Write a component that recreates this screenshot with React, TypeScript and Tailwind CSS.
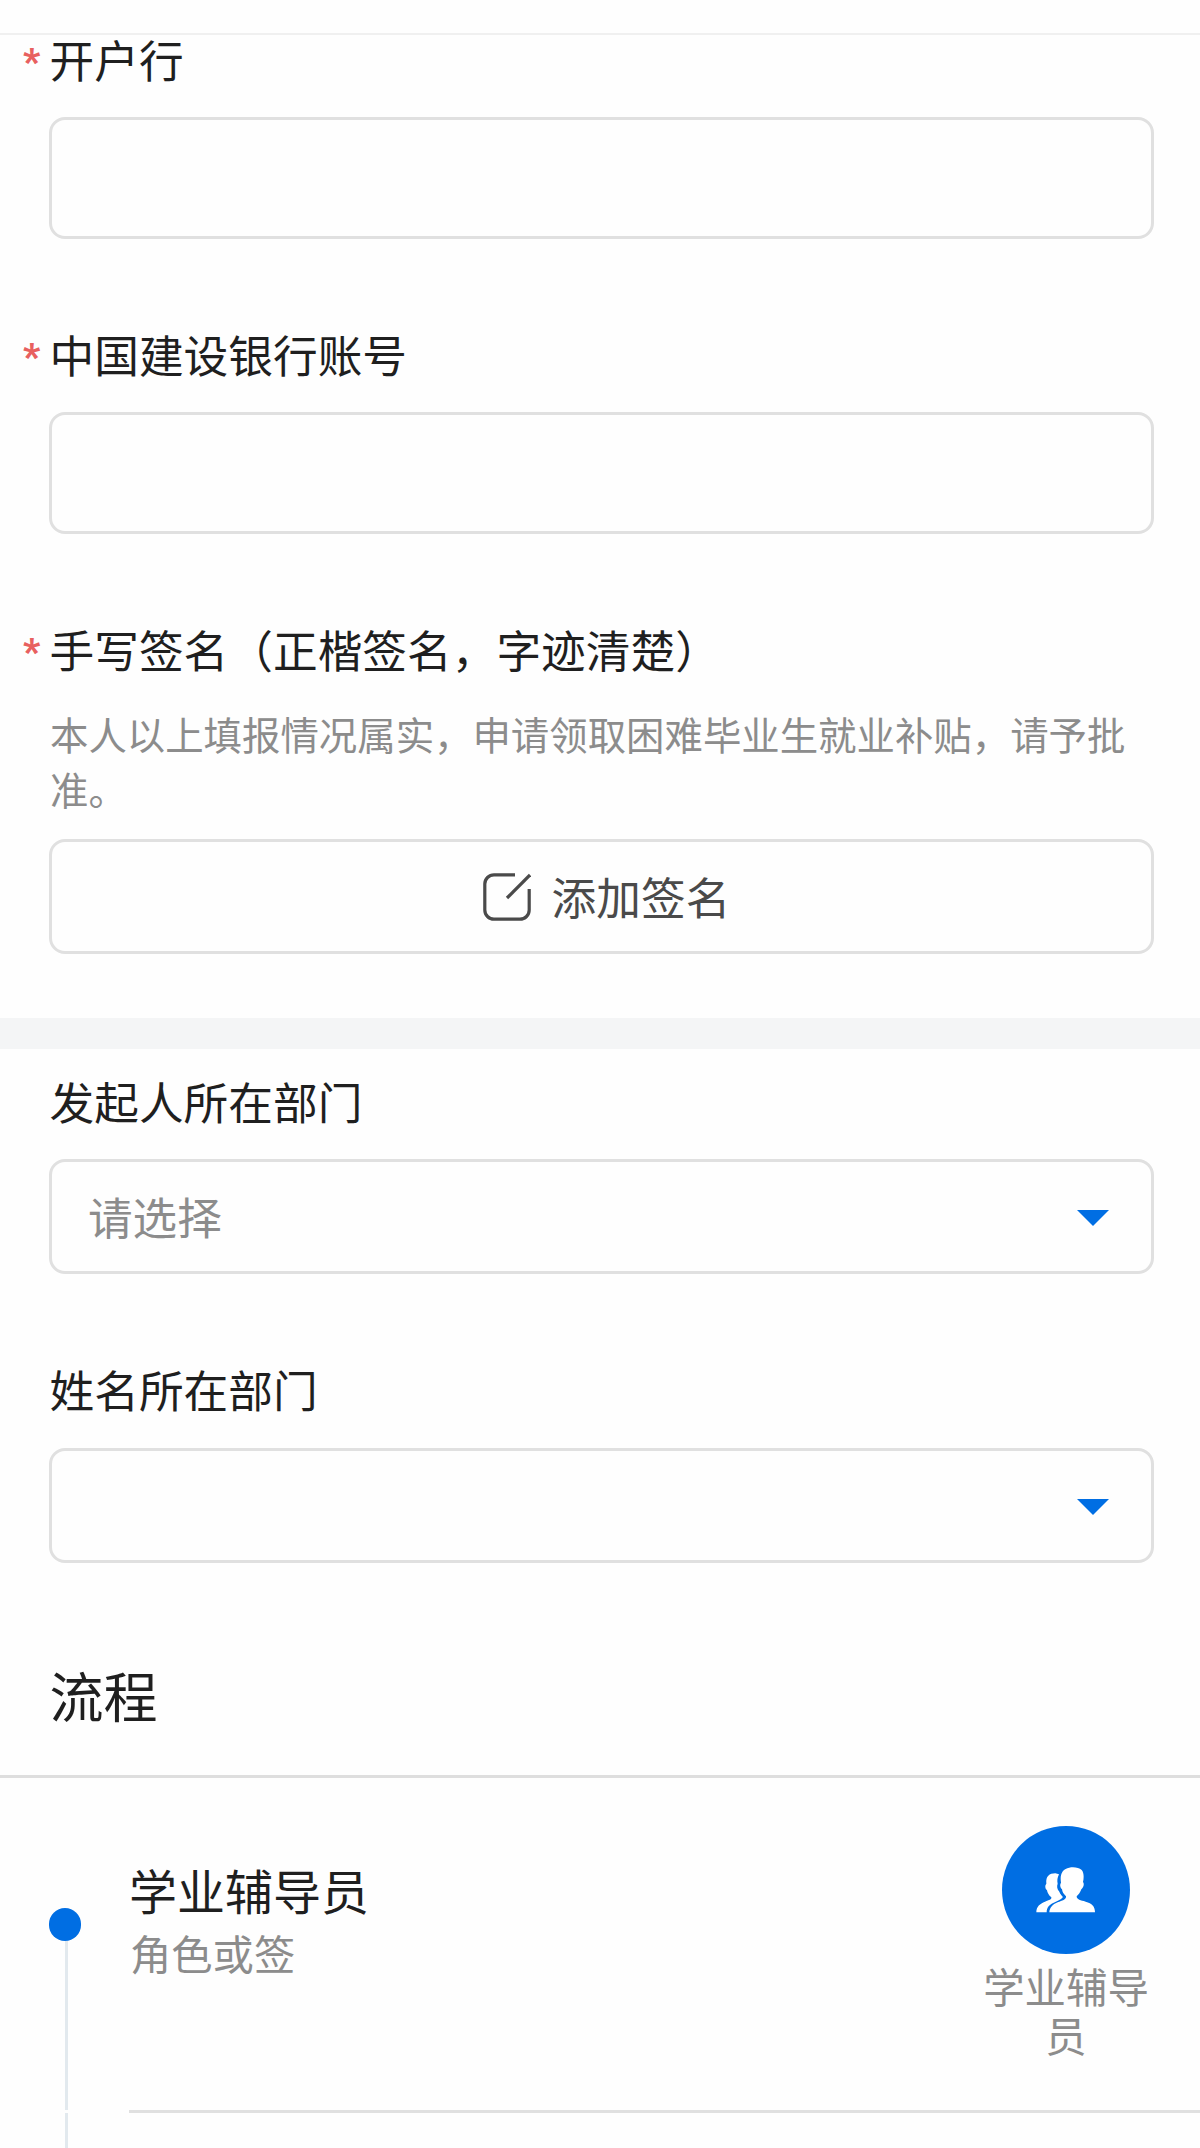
import type { ReactNode } from "react";

const SignIcon = () => (
  <svg className="mt-px h-12 w-12 shrink-0" viewBox="0 0 48 48" fill="none" stroke="#4a4a4a" strokeWidth="3.2">
    <path d="M32 1.8H11A9.2 9.2 0 0 0 1.8 11V37A9.2 9.2 0 0 0 11 46.2H37A9.2 9.2 0 0 0 46.2 37V16" />
    <path d="M24 25L47 2" />
  </svg>
);

const GroupIcon = () => (
  <svg className="h-[46px] w-[60px]" viewBox="230 200 180 138" fill="#fff">
    <path d="M231 336C231 318 242 310 257 304C270 299 277 298 276 291C268 285 264 277 263 270C257 265 256 255 261 250C259 228 270 219 288 219L299 222C294 232 293 240 295 250C292 257 293 267 300 274C303 281 307 286 311 290C304 299 294 302 283 307C269 313 262 322 262 336Z" />
    <path d="M270 336C271 320 282 311 295 306C310 300 321 298 320 288C313 281 309 275 308 267C302 262 301 252 305 247C301 222 310 210 319 206C334 198 357 200 367 209C374 217 374 232 371 245C376 251 372 263 366 267C363 276 358 283 352 288C352 298 364 300 379 304C398 309 407 318 407 336Z" />
  </svg>
);

const Label = ({ required, children }: { required?: boolean; children: ReactNode }) => (
  <div className="flex h-12 items-center text-[44.7px] leading-[48px] text-[#1f1f1f]">
    <span className="w-[49.5px] shrink-0 pt-[6px] pl-[23px] font-[Roboto,sans-serif] text-[37px] font-black text-[#e8605f]">
      {required ? "*" : ""}
    </span>
    <span className="whitespace-nowrap">{children}</span>
  </div>
);

const TextBox = () => (
  <div className="mr-[46px] ml-[49px] h-[122px] rounded-2xl border-3 border-[#e0e0e0]" />
);

const SelectBox = ({ placeholder }: { placeholder?: string }) => (
  <div className="mr-[46px] ml-[49px] flex h-[115px] items-center justify-between rounded-2xl border-3 border-[#e0e0e0] pr-[42px] pl-9 text-[44.6px] leading-[48px] text-[#8c8c8c]">
    <span className="pb-[2px]">{placeholder}</span>
    <svg className="mt-[3px] h-4 w-8" viewBox="0 0 32 16">
      <path d="M0 0H32L16 16Z" fill="#006ee3" />
    </svg>
  </div>
);

export default function App() {
  return (
    <div className="h-[2148px] w-[1200px] overflow-hidden bg-[#fefefe] font-['Noto_Sans_CJK_SC',sans-serif]">
      <div className="h-[35px] border-b-2 border-[#f0f0f0]" />

      <div>
        <Label required>开户行</Label>
        <div className="mt-[34px]">
          <TextBox />
        </div>
      </div>

      <div className="mt-[91px]">
        <Label required>中国建设银行账号</Label>
        <div className="mt-[34px]">
          <TextBox />
        </div>
      </div>

      <div className="mt-[91px]">
        <Label required>手写签名（正楷签名，字迹清楚）</Label>
        <p className="mt-[33px] ml-[50px] w-[1085px] text-[38.42px] leading-[55px] text-[#8c8c8c]">
          本人以上填报情况属实，申请领取困难毕业生就业补贴，请予批准。
        </p>
        <div className="mt-[23px] mr-[46px] ml-[49px] flex h-[115px] items-center justify-center gap-[21px] rounded-2xl border-3 border-[#e0e0e0] pl-[10px] text-[44.7px] leading-[48px] text-[#4a4a4a]">
          <SignIcon />
          <span className="pb-[2px]">添加签名</span>
        </div>
      </div>

      <div className="mt-16 h-[31px] bg-[#f4f5f6]" />

      <div className="mt-7">
        <Label>发起人所在部门</Label>
        <div className="mt-[34px]">
          <SelectBox placeholder="请选择" />
        </div>
      </div>

      <div className="mt-[91px]">
        <Label>姓名所在部门</Label>
        <div className="mt-[35px]">
          <SelectBox />
        </div>
      </div>

      <h2 className="mt-[100px] ml-[49.5px] text-[54px] leading-[64px] text-[#1f1f1f]">流程</h2>
      <div className="mt-12 h-[3px] bg-[#dedede]" />

      <div className="flex">
        <div className="flex h-[370px] w-[129px] shrink-0 flex-col pt-[130px] pl-[49px]">
          <div className="h-[33px] w-8 rounded-full bg-[#006ee3]" />
          <div className="ml-4 h-[169px] w-[3px] bg-[#e2e9ee]" />
          <div className="mt-[3px] ml-4 w-[3px] flex-1 bg-[#e2e9ee]" />
        </div>
        <div className="flex h-[335px] flex-1 justify-between border-b-3 border-[#e0e0e0] pr-[49px]">
          <div className="pt-[83px]">
            <div className="text-[48px] leading-[56px] text-[#1f1f1f]">学业辅导员</div>
            <div className="mt-[11px] pl-px text-[41.3px] leading-[48px] text-[#8c8c8c]">角色或签</div>
          </div>
          <div className="flex w-[170px] flex-col items-center pt-12">
            <div className="flex h-32 w-32 items-center justify-center rounded-full bg-[#006ee3]">
              <GroupIcon />
            </div>
            <div className="mt-[7px] text-center text-[41.4px] leading-[49px] text-[#8c8c8c]">学业辅导员</div>
          </div>
        </div>
      </div>
    </div>
  );
}
